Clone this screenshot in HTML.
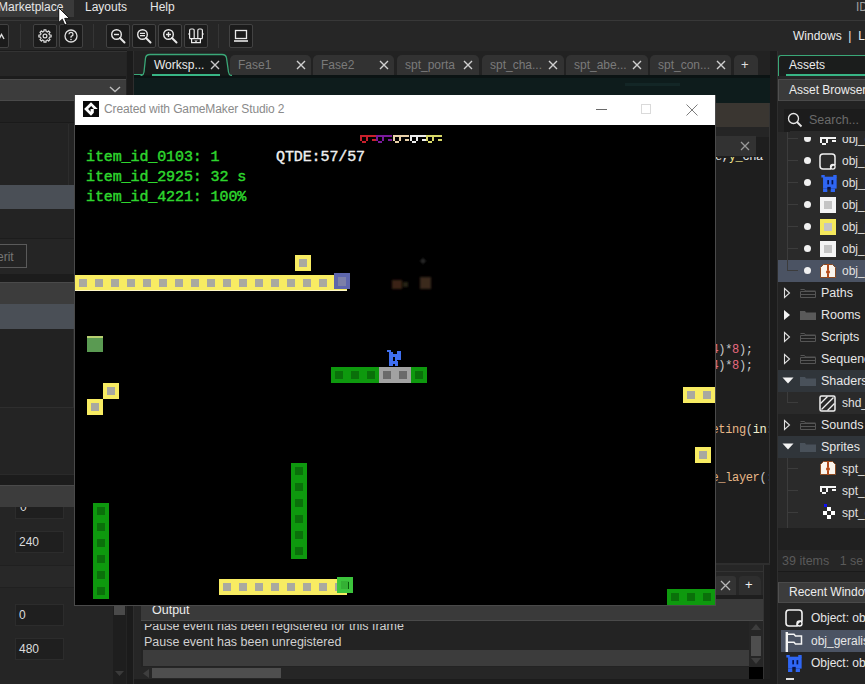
<!DOCTYPE html>
<html><head><meta charset="utf-8">
<style>
*{box-sizing:border-box;margin:0;padding:0}
html,body{width:865px;height:684px;overflow:hidden;background:#232323;font-family:"Liberation Sans",sans-serif;font-size:12px;color:#d8d8d8}
.a{position:absolute}
.t{position:absolute;white-space:pre;line-height:14px}
</style></head><body>
<!-- menu bar -->
<div class="a" style="left:0;top:0;width:865px;height:21px;background:#272727;border-bottom:1px solid #383838"></div>
<div class="a" style="left:0;top:0;width:74px;height:17px;background:#3a3a3a"></div>
<div class="t" style="left:-2px;top:0px;color:#e6e6e6">Marketplace</div>
<div class="t" style="left:85px;top:0px;color:#e6e6e6">Layouts</div>
<div class="t" style="left:150px;top:0px;color:#e6e6e6">Help</div>
<div class="t" style="left:856px;top:0px;color:#a0a0a0">ID</div>
<!-- toolbar -->
<div class="a" style="left:0;top:21px;width:865px;height:30px;background:#262626"></div>
<div class="a" style="left:-15px;top:24px;width:24px;height:24px;background:#1b1b1b;border:1px solid #424242;border-radius:2px"></div>
<svg class="a" style="left:0;top:31px" width="8" height="12"><path d="M-1 8 L1.5 3.5 L4 8" fill="none" stroke="#ddd" stroke-width="1.4"/></svg>
<div class="a" style="left:20px;top:24px;width:1px;height:24px;background:#353535"></div>
<div class="a" style="left:33px;top:24px;width:24px;height:24px;background:#1b1b1b;border:1px solid #424242;border-radius:2px"></div>
<svg class="a" style="left:37px;top:28px" width="16" height="16" viewBox="0 0 16 16"><path d="M12.25 6.24 L12.46 6.89 L14.12 6.98 L14.12 9.02 L12.46 9.11 L12.25 9.76 L11.94 10.37 L13.04 11.60 L11.60 13.04 L10.37 11.94 L9.76 12.25 L9.11 12.46 L9.02 14.12 L6.98 14.12 L6.89 12.46 L6.24 12.25 L5.63 11.94 L4.40 13.04 L2.96 11.60 L4.06 10.37 L3.75 9.76 L3.54 9.11 L1.88 9.02 L1.88 6.98 L3.54 6.89 L3.75 6.24 L4.06 5.63 L2.96 4.40 L4.40 2.96 L5.63 4.06 L6.24 3.75 L6.89 3.54 L6.98 1.88 L9.02 1.88 L9.11 3.54 L9.76 3.75 L10.37 4.06 L11.60 2.96 L13.04 4.40 L11.94 5.63Z" fill="none" stroke="#e0e0e0" stroke-width="1.2" stroke-linejoin="round"/><circle cx="8" cy="8" r="1.9" fill="none" stroke="#e0e0e0" stroke-width="1.2"/></svg>
<div class="a" style="left:59px;top:24px;width:24px;height:24px;background:#1b1b1b;border:1px solid #424242;border-radius:2px"></div>
<svg class="a" style="left:63px;top:28px" width="16" height="16" viewBox="0 0 16 16"><circle cx="8" cy="8" r="6" fill="none" stroke="#e0e0e0" stroke-width="1.3"/><path d="M6 6.3a2 2 0 1 1 2.6 1.9c-.5.2-.6.5-.6 1v.6" fill="none" stroke="#e0e0e0" stroke-width="1.3"/><circle cx="8" cy="11.5" r=".8" fill="#e0e0e0"/></svg>
<div class="a" style="left:93px;top:24px;width:1px;height:24px;background:#353535"></div>
<div class="a" style="left:106px;top:24px;width:24px;height:24px;background:#1b1b1b;border:1px solid #424242;border-radius:2px"></div>
<svg class="a" style="left:110px;top:28px" width="16" height="16" viewBox="0 0 16 16"><circle cx="6.5" cy="6.5" r="4.8" fill="none" stroke="#e8e8e8" stroke-width="1.4"/><path d="M10 10l4.5 4.5" stroke="#e8e8e8" stroke-width="2" stroke-linecap="round"/><path d="M4 6.5h5" stroke="#e8e8e8" stroke-width="1.4"/></svg>
<div class="a" style="left:132px;top:24px;width:24px;height:24px;background:#1b1b1b;border:1px solid #424242;border-radius:2px"></div>
<svg class="a" style="left:136px;top:28px" width="16" height="16" viewBox="0 0 16 16"><circle cx="6.5" cy="6.5" r="4.8" fill="none" stroke="#e8e8e8" stroke-width="1.4"/><path d="M10 10l4.5 4.5" stroke="#e8e8e8" stroke-width="2" stroke-linecap="round"/><path d="M4 5.3h5M4 7.7h5" stroke="#e8e8e8" stroke-width="1.2"/></svg>
<div class="a" style="left:158px;top:24px;width:24px;height:24px;background:#1b1b1b;border:1px solid #424242;border-radius:2px"></div>
<svg class="a" style="left:162px;top:28px" width="16" height="16" viewBox="0 0 16 16"><circle cx="6.5" cy="6.5" r="4.8" fill="none" stroke="#e8e8e8" stroke-width="1.4"/><path d="M10 10l4.5 4.5" stroke="#e8e8e8" stroke-width="2" stroke-linecap="round"/><path d="M4 6.5h5M6.5 4v5" stroke="#e8e8e8" stroke-width="1.4"/></svg>
<div class="a" style="left:184px;top:24px;width:24px;height:24px;background:#1b1b1b;border:1px solid #424242;border-radius:2px"></div>
<svg class="a" style="left:188px;top:28px" width="16" height="16" viewBox="0 0 16 16"><path d="M1.6 10.6V2.4Q1.6 1 3 1H4.8Q6.2 1 6.2 2.4V10.6M9.8 10.6V2.4Q9.8 1 11.2 1H13Q14.4 1 14.4 2.4V10.6M1.6 10.6H14.4M3.6 10.6V14.6H12.4V10.6" fill="none" stroke="#ececec" stroke-width="1.2"/><path d="M6.3 12.4L8 14.3 9.7 12.4z M0 6L1.6 4.4V7.6z M16 6L14.4 4.4V7.6z" fill="#ececec"/></svg>
<div class="a" style="left:218px;top:24px;width:1px;height:24px;background:#353535"></div>
<div class="a" style="left:229px;top:24px;width:24px;height:24px;background:#1b1b1b;border:1px solid #424242;border-radius:2px"></div>
<svg class="a" style="left:233px;top:28px" width="16" height="16" viewBox="0 0 16 16"><rect x="2.5" y="2.5" width="11" height="8" fill="none" stroke="#e8e8e8" stroke-width="1.3"/><path d="M1 13h14" stroke="#e8e8e8" stroke-width="1.6"/></svg>
<div class="t" style="left:793px;top:29px;color:#ececec">Windows  |  L</div>

<!-- left panel -->
<div class="a" style="left:0;top:51px;width:127px;height:633px;background:#242424"></div>
<div class="a" style="left:0;top:51px;width:126px;height:28px;background:#262626"></div>
<div class="a" style="left:0;top:50px;width:127px;height:1px;background:#1c1c1c"></div><div class="a" style="left:0;top:51px;width:127px;height:1px;background:#333"></div><div class="a" style="left:0;top:76px;width:126px;height:3px;background:#1c1c1c"></div><div class="a" style="left:0;top:79px;width:126px;height:22px;background:#3c3c3c;border-top:1px solid #4c4c4c;border-bottom:1px solid #4a4a4a"></div>
<svg class="a" style="left:108px;top:84px" width="14" height="10"><path d="M2 3l5 4.5 5-4.5" fill="none" stroke="#bdbdbd" stroke-width="1.4"/></svg>
<div class="a" style="left:0;top:101px;width:126px;height:22px;background:#212121;border-bottom:1px solid #1a1a1a"></div>
<div class="a" style="left:0;top:124px;width:126px;height:61px;background:#232323"></div>
<div class="a" style="left:68px;top:124px;width:1px;height:61px;background:#2c2c2c"></div>
<div class="a" style="left:0;top:185px;width:126px;height:24px;background:#4a4f56"></div>
<div class="a" style="left:0;top:209px;width:126px;height:30px;background:#232323;border-bottom:1px solid #1c1c1c"></div>
<div class="a" style="left:0;top:239px;width:126px;height:35px;background:#252525"></div>
<div class="a" style="left:-20px;top:244px;width:47px;height:24px;border:1px solid #5a5a5a;background:#242424"></div>
<div class="t" style="left:-3px;top:250px;color:#767676">erit</div>
<div class="a" style="left:0;top:274px;width:126px;height:8px;background:#1c1c1c"></div>
<div class="a" style="left:0;top:282px;width:126px;height:22px;background:#3c3c3c;border-top:1px solid #4a4a4a"></div>
<div class="a" style="left:0;top:304px;width:126px;height:25px;background:#4a4f56"></div>
<div class="a" style="left:0;top:329px;width:126px;height:79px;background:#222222;border-bottom:1px solid #2e2e2e"></div><div class="a" style="left:73px;top:329px;width:1px;height:79px;background:#2e2e2e"></div>
<div class="a" style="left:0;top:408px;width:126px;height:66px;background:#242424"></div>
<div class="a" style="left:0;top:474px;width:126px;height:11px;background:#1c1c1c;border-top:1px solid #2a2a2a"></div>
<div class="a" style="left:0;top:507px;width:113px;height:177px;background:#252525"></div>
<div class="a" style="left:15px;top:497px;width:49px;height:22px;background:#1f1f1f;border:1px solid #2c2c2c"></div>
<div class="t" style="left:20px;top:500px;color:#dcdcdc">0</div>
<div class="a" style="left:0;top:485px;width:126px;height:22px;background:#3c3c3c;border-top:1px solid #4a4a4a"></div>
<div class="a" style="left:15px;top:531px;width:49px;height:22px;background:#1f1f1f;border:1px solid #2c2c2c"></div>
<div class="t" style="left:19px;top:535px;color:#dcdcdc">240</div>
<div class="a" style="left:0;top:565px;width:113px;height:23px;background:#282828;border-top:1px solid #202020;border-bottom:1px solid #202020"></div>
<div class="a" style="left:15px;top:604px;width:49px;height:22px;background:#1f1f1f;border:1px solid #2c2c2c"></div>
<div class="t" style="left:19px;top:608px;color:#dcdcdc">0</div>
<div class="a" style="left:15px;top:638px;width:49px;height:22px;background:#1f1f1f;border:1px solid #2c2c2c"></div>
<div class="t" style="left:19px;top:642px;color:#dcdcdc">480</div>
<div class="a" style="left:113px;top:507px;width:13px;height:177px;background:#1e1e1e"></div>
<div class="a" style="left:114px;top:605px;width:11px;height:10px;background:#4a4a4a"></div>
<svg class="a" style="left:113px;top:670px" width="13" height="8"><path d="M2 1h9l-4.5 5z" fill="#3a3a3a"/></svg>
<div class="a" style="left:127px;top:51px;width:6px;height:633px;background:#1b1b1b"></div>
<div class="a" style="left:133px;top:51px;width:1px;height:633px;background:#2e2e2e"></div>

<!-- workspace -->
<div class="a" style="left:134px;top:51px;width:636px;height:24px;background:#222222"></div>
<div class="a" style="left:134px;top:75px;width:636px;height:490px;background:#0e1c1c"></div><div class="a" style="left:134px;top:75px;width:636px;height:3px;background:#0b1313"></div><div class="a" style="left:625px;top:83px;width:55px;height:3px;background:#132626"></div>
<div class="a" style="left:134px;top:74px;width:160px;height:1px;background:linear-gradient(90deg,#3aa878,#3aa878 60%,rgba(58,168,120,0))"></div>
<div class="a" style="left:230px;top:55px;width:81px;height:20px;background:#323232;border-radius:5px 5px 0 0"></div><div class="t" style="left:238px;top:58px;color:#7a7a7a">Fase1</div><svg class="a" style="left:296px;top:60px" width="10" height="10"><path d="M1 1L9 9M9 1L1 9" stroke="#d0d0d0" stroke-width="1.4"/></svg><div class="a" style="left:313px;top:55px;width:81px;height:20px;background:#323232;border-radius:5px 5px 0 0"></div><div class="t" style="left:321px;top:58px;color:#7a7a7a">Fase2</div><svg class="a" style="left:379px;top:60px" width="10" height="10"><path d="M1 1L9 9M9 1L1 9" stroke="#d0d0d0" stroke-width="1.4"/></svg><div class="a" style="left:397px;top:55px;width:82px;height:20px;background:#323232;border-radius:5px 5px 0 0"></div><div class="t" style="left:405px;top:58px;color:#7a7a7a">spt_porta</div><svg class="a" style="left:463px;top:60px" width="10" height="10"><path d="M1 1L9 9M9 1L1 9" stroke="#d0d0d0" stroke-width="1.4"/></svg><div class="a" style="left:482px;top:55px;width:82px;height:20px;background:#323232;border-radius:5px 5px 0 0"></div><div class="t" style="left:490px;top:58px;color:#7a7a7a">spt_cha...</div><svg class="a" style="left:548px;top:60px" width="10" height="10"><path d="M1 1L9 9M9 1L1 9" stroke="#d0d0d0" stroke-width="1.4"/></svg><div class="a" style="left:566px;top:55px;width:82px;height:20px;background:#323232;border-radius:5px 5px 0 0"></div><div class="t" style="left:574px;top:58px;color:#7a7a7a">spt_abe...</div><svg class="a" style="left:632px;top:60px" width="10" height="10"><path d="M1 1L9 9M9 1L1 9" stroke="#d0d0d0" stroke-width="1.4"/></svg><div class="a" style="left:650px;top:55px;width:81px;height:20px;background:#323232;border-radius:5px 5px 0 0"></div><div class="t" style="left:658px;top:58px;color:#7a7a7a">spt_con...</div><svg class="a" style="left:716px;top:60px" width="10" height="10"><path d="M1 1L9 9M9 1L1 9" stroke="#d0d0d0" stroke-width="1.4"/></svg>
<div class="a" style="left:734px;top:55px;width:24px;height:20px;background:#323232;border-radius:5px 5px 0 0"></div>
<div class="t" style="left:741px;top:58px;color:#e0e0e0;font-size:13px">+</div>
<svg class="a" style="left:140px;top:53px" width="92" height="23"><path d="M0.5 22.5 Q3.5 22.5 4 19 L5.5 5 Q6 1.5 10 1.5 H82 Q86 1.5 86.5 5 L88.5 19 Q89 22.5 92 22.5" fill="#161a19" stroke="#3aa878" stroke-width="1.3"/></svg>
<div class="t" style="left:154px;top:58px;color:#eaeaea">Worksp...</div>
<svg class="a" style="left:210px;top:60px" width="10" height="10"><path d="M1 1L9 9M9 1L1 9" stroke="#c8c8c8" stroke-width="1.4"/></svg>
<div class="a" style="left:152px;top:74px;width:68px;height:2px;background:#38b585"></div>
<!-- code window -->
<div class="a" style="left:140px;top:103px;width:630px;height:24px;background:#3a3631"></div>
<div class="a" style="left:140px;top:127px;width:630px;height:10px;background:#252525"></div>
<div class="a" style="left:140px;top:137px;width:630px;height:427px;background:#1e1e1e"></div>
<div class="a" style="left:700px;top:136px;width:56px;height:20px;background:#323232"></div>
<svg class="a" style="left:740px;top:141px" width="10" height="10"><path d="M1 1L9 9M9 1L1 9" stroke="#9a9a9a" stroke-width="1.3"/></svg>
<div class="a" style="left:715px;top:157px;width:55px;height:407px;background:#1e1e1e;overflow:hidden">
<div class="t" style="left:0;top:-8px;font:12px/16px 'Liberation Mono',monospace;letter-spacing:-0.35px;color:#d8d8d8"><span style="color:#e8e8e8">e,</span><span style="color:#f0e890">y_</span><span style="color:#e8e8e8">cha</span></div>
<div class="t" style="left:-3.5px;top:185px;font:12px/16px 'Liberation Mono',monospace;letter-spacing:-0.35px;color:#c8c8c8"><span style="color:#e07080">4</span>)*<span style="color:#e86a80">8</span>);
<span style="color:#e07080">4</span>)*<span style="color:#e86a80">8</span>);</div>
<div class="t" style="left:-3.5px;top:265px;font:12px/16px 'Liberation Mono',monospace;letter-spacing:-0.35px;color:#c8c8c8"><span style="color:#e8b888">eting</span>(<span style="color:#f0f0d0">in:</span></div>
<div class="t" style="left:-3.5px;top:313px;font:12px/16px 'Liberation Mono',monospace;letter-spacing:-0.35px;color:#c8c8c8"><span style="color:#e8b888">e_layer</span>(:</div>
</div>
<div class="a" style="left:769px;top:103px;width:1px;height:461px;background:#333"></div>
<div class="a" style="left:140px;top:563px;width:630px;height:2px;background:#2e2e2e"></div>

<!-- right separator + panel -->
<div class="a" style="left:770px;top:51px;width:8px;height:633px;background:#1c1c1c"></div>
<div class="a" style="left:777px;top:51px;width:88px;height:633px;background:#262626;border-left:1px solid #2e2e2e"></div>
<div class="a" style="left:778px;top:55px;width:87px;height:21px;background:#1b1d1c;border-left:1.3px solid #3aa878;border-top:1.3px solid #3aa878;border-radius:3px 0 0 0"></div>
<div class="t" style="left:789px;top:58px;color:#ececec">Assets</div>
<div class="a" style="left:786px;top:74px;width:79px;height:2px;background:#38b585"></div>
<div class="a" style="left:778px;top:79px;width:87px;height:22px;background:#3a3a3a;border-left:1px solid #505050;border-top:1px solid #4a4a4a;border-bottom:1px solid #4a4a4a"></div>
<div class="t" style="left:789px;top:83px;color:#ececec">Asset Browser</div>
<div class="a" style="left:778px;top:101px;width:87px;height:31px;background:#232323"></div>
<div class="a" style="left:784px;top:109px;width:81px;height:23px;background:#1c1c1c"></div>
<svg class="a" style="left:787px;top:112px" width="16" height="16"><circle cx="6.5" cy="6.5" r="5" fill="none" stroke="#e8e8e8" stroke-width="1.3"/><path d="M10 10L14.5 14.5" stroke="#e8e8e8" stroke-width="1.8"/></svg>
<div class="t" style="left:809px;top:113px;color:#6a6a6a;font-size:12.5px">Search...</div>
<div class="a" style="left:778px;top:132px;width:87px;height:150px;background:#2a2a2a"></div><div class="a" style="left:778px;top:260px;width:87px;height:22px;background:#4b5363"></div><div class="a" style="left:778px;top:282px;width:87px;height:88px;background:#222222"></div><div class="a" style="left:778px;top:370px;width:87px;height:22px;background:#30353a"></div><div class="a" style="left:778px;top:392px;width:87px;height:22px;background:#2a2a2a"></div><div class="a" style="left:778px;top:414px;width:87px;height:22px;background:#222222"></div><div class="a" style="left:778px;top:436px;width:87px;height:22px;background:#30353a"></div><div class="a" style="left:778px;top:458px;width:87px;height:70px;background:#2a2a2a"></div><div class="a" style="left:787px;top:132px;width:1px;height:139px;background:#3c3c3c"></div><div class="a" style="left:788px;top:138px;width:10px;height:1px;background:#3c3c3c"></div><div class="a" style="left:788px;top:160px;width:10px;height:1px;background:#3c3c3c"></div><div class="a" style="left:788px;top:182px;width:10px;height:1px;background:#3c3c3c"></div><div class="a" style="left:788px;top:204px;width:10px;height:1px;background:#3c3c3c"></div><div class="a" style="left:788px;top:226px;width:10px;height:1px;background:#3c3c3c"></div><div class="a" style="left:788px;top:248px;width:10px;height:1px;background:#3c3c3c"></div><div class="a" style="left:788px;top:270px;width:10px;height:1px;background:#3c3c3c"></div><div class="a" style="left:787px;top:392px;width:1px;height:11px;background:#3c3c3c"></div><div class="a" style="left:788px;top:402px;width:10px;height:1px;background:#3c3c3c"></div><div class="a" style="left:787px;top:458px;width:1px;height:70px;background:#3c3c3c"></div><div class="a" style="left:788px;top:468px;width:10px;height:1px;background:#3c3c3c"></div><div class="a" style="left:788px;top:490px;width:10px;height:1px;background:#3c3c3c"></div><div class="a" style="left:788px;top:512px;width:10px;height:1px;background:#3c3c3c"></div><div class="a" style="left:804px;top:135.0px;width:7px;height:7px;border-radius:50%;background:#f0f0f0"></div><div class="a" style="left:804px;top:157.0px;width:7px;height:7px;border-radius:50%;background:#f0f0f0"></div><div class="a" style="left:804px;top:179.0px;width:7px;height:7px;border-radius:50%;background:#f0f0f0"></div><div class="a" style="left:804px;top:201.0px;width:7px;height:7px;border-radius:50%;background:#f0f0f0"></div><div class="a" style="left:804px;top:223.0px;width:7px;height:7px;border-radius:50%;background:#f0f0f0"></div><div class="a" style="left:804px;top:245.0px;width:7px;height:7px;border-radius:50%;background:#f0f0f0"></div><div class="a" style="left:804px;top:267.0px;width:7px;height:7px;border-radius:50%;background:#f0f0f0"></div><svg class="a" style="left:820px;top:137px" width="16" height="8"><g fill="#f4f4f4"><rect x="0" y="0" width="16" height="2"/><rect x="0" y="2" width="2" height="4"/><rect x="6" y="2" width="2" height="4"/><rect x="2" y="6" width="4" height="2"/><rect x="12" y="3" width="4" height="2"/></g></svg><svg class="a" style="left:819px;top:153px" width="17" height="17" viewBox="0 0 17 17"><path d="M4 1H13Q16 1 16 4V11.5A4.5 4.5 0 0 0 11.5 16H4Q1 16 1 13V4Q1 1 4 1Z" fill="none" stroke="#f0f0f0" stroke-width="1.5"/><circle cx="13.8" cy="13.8" r="2.3" fill="none" stroke="#f0f0f0" stroke-width="1.3"/></svg><svg class="a" style="left:821px;top:175px" width="16" height="17" viewBox="0 0 18 20"><g fill="#2f66f4"><rect x="0" y="0" width="4" height="3"/><rect x="14" y="0" width="4" height="3"/><rect x="2" y="2" width="16" height="14"/><rect x="2" y="16" width="5" height="4"/><rect x="11" y="16" width="5" height="4"/></g><rect x="7" y="6" width="2" height="5" fill="#06124a"/><rect x="12" y="6" width="2" height="5" fill="#06124a"/><rect x="7" y="14" width="4" height="3" fill="#06124a"/></svg><div class="a" style="left:820px;top:197px;width:16px;height:16px;background:#f4f4f4"></div><div class="a" style="left:824px;top:201px;width:8px;height:8px;background:#c4c4c4"></div><div class="a" style="left:820px;top:219px;width:16px;height:16px;background:#f4e85c"></div><div class="a" style="left:824px;top:223px;width:8px;height:8px;background:#c4c4c4"></div><div class="a" style="left:820px;top:241px;width:16px;height:16px;background:#f4f4f4"></div><div class="a" style="left:824px;top:245px;width:8px;height:8px;background:#c4c4c4"></div><svg class="a" style="left:820px;top:264px" width="16" height="14" viewBox="0 0 16 14"><path d="M3.5 0.5H12.5L15.5 3.5V13.5H0.5V3.5Z" fill="#faf4ec" stroke="#8a4a22" stroke-width="1"/><rect x="7" y="0" width="2" height="14" fill="#b04a1a"/><circle cx="8" cy="8" r="1.6" fill="none" stroke="#c05a2a" stroke-width="1"/></svg><div class="t" style="left:842px;top:132.0px;color:#e0e0e0">obj_c</div><div class="t" style="left:842px;top:154.0px;color:#e0e0e0">obj_g</div><div class="t" style="left:842px;top:176.0px;color:#e0e0e0">obj_j</div><div class="t" style="left:842px;top:198.0px;color:#e0e0e0">obj_l</div><div class="t" style="left:842px;top:220.0px;color:#e0e0e0">obj_p</div><div class="t" style="left:842px;top:242.0px;color:#e0e0e0">obj_p</div><div class="t" style="left:842px;top:264.0px;color:#e0e0e0">obj_p</div><svg class="a" style="left:783px;top:286.5px" width="8" height="12"><path d="M1.5 1.5L6.5 6 1.5 10.5Z" fill="none" stroke="#e0e0e0" stroke-width="1.1"/></svg><svg class="a" style="left:800px;top:287.5px" width="16" height="10"><path d="M0.5 1.5h4l1 1.5h10M0.5 3.5h15v6h-15zM0.5 6.5h15" fill="none" stroke="#555" stroke-width="1"/></svg><div class="t" style="left:821px;top:286.0px;color:#e6e6e6;font-size:12.5px">Paths</div><svg class="a" style="left:783px;top:308.5px" width="8" height="12"><path d="M1 1L7 6 1 11Z" fill="#f4f4f4"/></svg><svg class="a" style="left:800px;top:309.5px" width="16" height="10"><path d="M0 1h5l1 1.5H16V10H0Z" fill="#5a5a5a"/></svg><div class="t" style="left:821px;top:308.0px;color:#e6e6e6;font-size:12.5px">Rooms</div><svg class="a" style="left:783px;top:330.5px" width="8" height="12"><path d="M1.5 1.5L6.5 6 1.5 10.5Z" fill="none" stroke="#e0e0e0" stroke-width="1.1"/></svg><svg class="a" style="left:800px;top:331.5px" width="16" height="10"><path d="M0.5 1.5h4l1 1.5h10M0.5 3.5h15v6h-15zM0.5 6.5h15" fill="none" stroke="#555" stroke-width="1"/></svg><div class="t" style="left:821px;top:330.0px;color:#e6e6e6;font-size:12.5px">Scripts</div><svg class="a" style="left:783px;top:352.5px" width="8" height="12"><path d="M1.5 1.5L6.5 6 1.5 10.5Z" fill="none" stroke="#e0e0e0" stroke-width="1.1"/></svg><svg class="a" style="left:800px;top:353.5px" width="16" height="10"><path d="M0.5 1.5h4l1 1.5h10M0.5 3.5h15v6h-15zM0.5 6.5h15" fill="none" stroke="#555" stroke-width="1"/></svg><div class="t" style="left:821px;top:352.0px;color:#e6e6e6;font-size:12.5px">Sequences</div><svg class="a" style="left:782px;top:376.5px" width="12" height="8"><path d="M0.5 0.5H11.5L6 6.5Z" fill="#f4f4f4"/></svg><svg class="a" style="left:800px;top:375.5px" width="16" height="10"><path d="M0 1h5l1 1.5H16V10H0Z" fill="#49515a"/></svg><div class="t" style="left:821px;top:374.0px;color:#e6e6e6;font-size:12.5px">Shaders</div><svg class="a" style="left:783px;top:418.5px" width="8" height="12"><path d="M1.5 1.5L6.5 6 1.5 10.5Z" fill="none" stroke="#e0e0e0" stroke-width="1.1"/></svg><svg class="a" style="left:800px;top:419.5px" width="16" height="10"><path d="M0.5 1.5h4l1 1.5h10M0.5 3.5h15v6h-15zM0.5 6.5h15" fill="none" stroke="#555" stroke-width="1"/></svg><div class="t" style="left:821px;top:418.0px;color:#e6e6e6;font-size:12.5px">Sounds</div><svg class="a" style="left:782px;top:442.5px" width="12" height="8"><path d="M0.5 0.5H11.5L6 6.5Z" fill="#f4f4f4"/></svg><svg class="a" style="left:800px;top:441.5px" width="16" height="10"><path d="M0 1h5l1 1.5H16V10H0Z" fill="#49515a"/></svg><div class="t" style="left:821px;top:440.0px;color:#e6e6e6;font-size:12.5px">Sprites</div><svg class="a" style="left:819px;top:394.5px" width="17" height="17" viewBox="0 0 17 17"><rect x="1" y="1" width="15" height="15" rx="1.5" fill="none" stroke="#f0f0f0" stroke-width="1.5"/><path d="M1.5 8.5L8.5 1.5M2.5 14.5L14.5 2.5M8.5 15.5L15.5 8.5" stroke="#f0f0f0" stroke-width="1.4"/></svg><div class="t" style="left:842px;top:396.0px;color:#e0e0e0">shd_</div><svg class="a" style="left:820px;top:461px" width="16" height="14" viewBox="0 0 16 14"><path d="M3.5 0.5H12.5L15.5 3.5V13.5H0.5V3.5Z" fill="#faf4ec" stroke="#8a4a22" stroke-width="1"/><rect x="7" y="0" width="2" height="14" fill="#b04a1a"/><circle cx="8" cy="8" r="1.6" fill="none" stroke="#c05a2a" stroke-width="1"/></svg><svg class="a" style="left:820px;top:486px" width="16" height="8"><g fill="#f4f4f4"><rect x="0" y="0" width="16" height="2"/><rect x="0" y="2" width="2" height="4"/><rect x="6" y="2" width="2" height="4"/><rect x="2" y="6" width="4" height="2"/><rect x="12" y="3" width="4" height="2"/></g></svg><svg class="a" style="left:820px;top:504px" width="16" height="16"><rect x="4" y="0" width="3" height="3" fill="#1010f0"/><rect x="7" y="3" width="4" height="4" fill="#fff"/><rect x="3" y="7" width="4" height="4" fill="#fff"/><rect x="11" y="7" width="4" height="4" fill="#fff"/><rect x="7" y="11" width="4" height="4" fill="#fff"/></svg><div class="t" style="left:842px;top:462.0px;color:#e0e0e0">spt_a</div><div class="t" style="left:842px;top:484.0px;color:#e0e0e0">spt_c</div><div class="t" style="left:842px;top:506.0px;color:#e0e0e0">spt_c</div>
<div class="a" style="left:790px;top:131px;width:75px;height:6px;background:#2a2a2a"></div>
<div class="a" style="left:778px;top:528px;width:87px;height:22px;background:#202020"></div>
<div class="a" style="left:778px;top:550px;width:87px;height:22px;background:#262626;border-bottom:1px solid #1a1a1a"></div>
<div class="t" style="left:782px;top:554px;color:#5a5a5a;font-size:12.5px">39 items   1 se</div>
<div class="a" style="left:778px;top:572px;width:87px;height:10px;background:#232323"></div>
<div class="a" style="left:778px;top:582px;width:87px;height:21px;background:#3c3c3c;border-left:1px solid #505050;border-top:1px solid #4a4a4a;border-bottom:1px solid #4a4a4a"></div>
<div class="t" style="left:789px;top:585px;color:#ececec">Recent Windows</div>
<div class="a" style="left:778px;top:603px;width:87px;height:81px;background:#242424"></div>
<div class="a" style="left:781px;top:630px;width:84px;height:22px;background:#4b5363"></div>
<svg class="a" style="left:785px;top:609px" width="18" height="18" viewBox="0 0 18 18"><path d="M4 1H14Q17 1 17 4V12A5 5 0 0 0 12 17H4Q1 17 1 14V4Q1 1 4 1Z" fill="none" stroke="#f0f0f0" stroke-width="1.6"/><circle cx="14.5" cy="14.5" r="2.5" fill="none" stroke="#f0f0f0" stroke-width="1.4"/></svg>
<div class="t" style="left:811px;top:611px;color:#e6e6e6">Object: obj</div>
<svg class="a" style="left:785px;top:631px" width="18" height="21" viewBox="0 0 18 21"><path d="M1.8 1V21" stroke="#f4f4f4" stroke-width="2.4"/><path d="M2.5 3.2H9L10.5 5H16.5V13H10.5L9 11.2H2.5" fill="none" stroke="#f4f4f4" stroke-width="1.5"/></svg>
<div class="t" style="left:811px;top:634px;color:#e6e6e6">obj_geralista</div>
<svg class="a" style="left:786px;top:655px" width="16" height="17" viewBox="0 0 18 20"><g fill="#2f66f4"><rect x="0" y="0" width="4" height="3"/><rect x="14" y="0" width="4" height="3"/><rect x="2" y="2" width="16" height="14"/><rect x="2" y="16" width="5" height="4"/><rect x="11" y="16" width="5" height="4"/></g><rect x="7" y="6" width="2" height="5" fill="#06124a"/><rect x="12" y="6" width="2" height="5" fill="#06124a"/><rect x="7" y="14" width="4" height="3" fill="#06124a"/></svg>
<div class="t" style="left:811px;top:656px;color:#e6e6e6">Object: obj</div>
<div class="a" style="left:786px;top:678px;width:8px;height:2px;background:#ddd"></div>

<!-- output dock -->
<div class="a" style="left:134px;top:565px;width:636px;height:119px;background:#262626"></div>
<div class="a" style="left:134px;top:571px;width:636px;height:1px;background:#333"></div>
<div class="a" style="left:715px;top:576px;width:21px;height:19px;background:#333;border-radius:3px 3px 0 0"></div>
<svg class="a" style="left:720px;top:580px" width="11" height="11"><path d="M1 1L10 10M10 1L1 10" stroke="#b8b8b8" stroke-width="1.3"/></svg>
<div class="a" style="left:739px;top:576px;width:22px;height:19px;background:#2e2e2e;border-radius:3px 5px 0 0"></div>
<div class="t" style="left:745px;top:578px;color:#f0f0f0;font-size:13px">+</div>
<div class="a" style="left:141px;top:595px;width:622px;height:4px;background:#1e1e1e"></div>
<div class="a" style="left:141px;top:599px;width:622px;height:22px;background:#3a3a3a;border-bottom:1px solid #4a4a4a"></div>
<div class="t" style="left:152px;top:603px;color:#ececec;font-size:12.5px">Output</div>
<div class="a" style="left:141px;top:621px;width:622px;height:63px;background:#232323"></div>
<div class="a" style="left:141px;top:624px;width:608px;height:26px;overflow:hidden"><div class="t" style="left:3px;top:-6px;color:#d0d0d0;font-size:12.5px;line-height:16px">Pause event has been registered for this frame
Pause event has been unregistered</div></div>
<div class="a" style="left:143px;top:650px;width:606px;height:16px;background:#3c3c3c"></div>
<div class="a" style="left:749px;top:621px;width:14px;height:46px;background:#262626"></div>
<svg class="a" style="left:750px;top:623px" width="12" height="8"><path d="M1 7h10L6 1z" fill="#3e3e3e"/></svg>
<div class="a" style="left:751px;top:636px;width:10px;height:20px;background:#4e4e4e"></div>
<svg class="a" style="left:750px;top:657px" width="12" height="8"><path d="M1 1h10L6 7z" fill="#3e3e3e"/></svg>
<div class="a" style="left:141px;top:667px;width:608px;height:12px;background:#262626"></div>
<svg class="a" style="left:142px;top:668px" width="8" height="11"><path d="M7 1v9L1 5.5z" fill="#3e3e3e"/></svg>
<div class="a" style="left:152px;top:668px;width:129px;height:10px;background:#4e4e4e"></div>
<svg class="a" style="left:750px;top:668px" width="8" height="11"><path d="M1 1v9l6-4.5z" fill="#3e3e3e"/></svg>
<div class="a" style="left:749px;top:667px;width:14px;height:12px;background:#000"></div>
<div class="a" style="left:763px;top:565px;width:7px;height:119px;background:#1f1f1f;border-left:1px solid #333"></div>
<div class="a" style="left:134px;top:679px;width:636px;height:5px;background:#1c1c1c"></div>

<!-- game window -->
<div class="a" style="left:74px;top:95px;width:642px;height:511px;background:#fff;border:1px solid #4a4a4a;border-top:none"></div><div class="a" style="left:75px;top:95px;width:640px;height:30px;background:#fff"></div>
<svg class="a" style="left:83px;top:101px" width="16" height="16" viewBox="0 0 16 16"><rect width="16" height="16" fill="#0a0a0a"/><path d="M8 1.2L14.8 8H10.8V11.8L8 14.8 1.1 8Z M8.2 5.1L5.1 8.1 7.6 10.8V8.1H10.9Z" fill="#fff" fill-rule="evenodd"/></svg>
<div class="t" style="left:104px;top:102px;color:#8a8a8a;font-size:12px;letter-spacing:-0.12px">Created with GameMaker Studio 2</div>
<div class="a" style="left:596px;top:109px;width:11px;height:1px;background:#6a6a6a"></div>
<div class="a" style="left:641px;top:104px;width:10px;height:10px;border:1px solid #dadada"></div>
<svg class="a" style="left:686px;top:104px" width="12" height="12"><path d="M0.5 0.5L11.5 11.5M11.5 0.5L0.5 11.5" stroke="#6e6e6e" stroke-width="0.9"/></svg>
<svg class="a" style="left:75px;top:125px" width="640" height="480" viewBox="0 0 640 480"><defs><filter id="bl"><feGaussianBlur stdDeviation="1.2"/></filter></defs><rect width="640" height="480" fill="#000"/><rect x="220" y="130" width="16" height="16" fill="#f8ec62"/><rect x="224" y="134" width="8" height="8" fill="#aaa9a0"/><rect x="0" y="150" width="16" height="16" fill="#f8ec62"/><rect x="4" y="154" width="8" height="8" fill="#aaa9a0"/><rect x="16" y="150" width="16" height="16" fill="#f8ec62"/><rect x="20" y="154" width="8" height="8" fill="#aaa9a0"/><rect x="32" y="150" width="16" height="16" fill="#f8ec62"/><rect x="36" y="154" width="8" height="8" fill="#aaa9a0"/><rect x="48" y="150" width="16" height="16" fill="#f8ec62"/><rect x="52" y="154" width="8" height="8" fill="#aaa9a0"/><rect x="64" y="150" width="16" height="16" fill="#f8ec62"/><rect x="68" y="154" width="8" height="8" fill="#aaa9a0"/><rect x="80" y="150" width="16" height="16" fill="#f8ec62"/><rect x="84" y="154" width="8" height="8" fill="#aaa9a0"/><rect x="96" y="150" width="16" height="16" fill="#f8ec62"/><rect x="100" y="154" width="8" height="8" fill="#aaa9a0"/><rect x="112" y="150" width="16" height="16" fill="#f8ec62"/><rect x="116" y="154" width="8" height="8" fill="#aaa9a0"/><rect x="128" y="150" width="16" height="16" fill="#f8ec62"/><rect x="132" y="154" width="8" height="8" fill="#aaa9a0"/><rect x="144" y="150" width="16" height="16" fill="#f8ec62"/><rect x="148" y="154" width="8" height="8" fill="#aaa9a0"/><rect x="160" y="150" width="16" height="16" fill="#f8ec62"/><rect x="164" y="154" width="8" height="8" fill="#aaa9a0"/><rect x="176" y="150" width="16" height="16" fill="#f8ec62"/><rect x="180" y="154" width="8" height="8" fill="#aaa9a0"/><rect x="192" y="150" width="16" height="16" fill="#f8ec62"/><rect x="196" y="154" width="8" height="8" fill="#aaa9a0"/><rect x="208" y="150" width="16" height="16" fill="#f8ec62"/><rect x="212" y="154" width="8" height="8" fill="#aaa9a0"/><rect x="224" y="150" width="16" height="16" fill="#f8ec62"/><rect x="228" y="154" width="8" height="8" fill="#aaa9a0"/><rect x="240" y="150" width="16" height="16" fill="#f8ec62"/><rect x="244" y="154" width="8" height="8" fill="#aaa9a0"/><rect x="256" y="150" width="16" height="16" fill="#f8ec62"/><rect x="260" y="154" width="8" height="8" fill="#aaa9a0"/><rect x="0" y="165" width="272" height="1" fill="#fff8c8"/><rect x="259" y="148" width="16" height="16" fill="#5e66ac"/><rect x="263" y="152" width="8" height="9" fill="#7d80a8"/><g filter="url(#bl)"><rect x="317" y="155" width="10" height="9" fill="#3a2416"/><rect x="328" y="157" width="5" height="5" fill="#262218"/><rect x="345" y="152" width="11" height="12" fill="#3a2a1a"/><path d="M348 133l3 3-3 3-3-3z" fill="#2a2a2a"/></g><rect x="12" y="211" width="16" height="16" fill="#5a9a52"/><rect x="12" y="211" width="16" height="2" fill="#b8d070"/><rect x="28" y="258" width="16" height="16" fill="#f8ec62"/><rect x="32" y="262" width="8" height="8" fill="#aaa9a0"/><rect x="12" y="274" width="16" height="16" fill="#f8ec62"/><rect x="16" y="278" width="8" height="8" fill="#aaa9a0"/><rect x="256" y="242" width="16" height="16" fill="#0e990e"/><rect x="260" y="246" width="8" height="8" fill="#0a700a"/><rect x="272" y="242" width="16" height="16" fill="#0e990e"/><rect x="276" y="246" width="8" height="8" fill="#0a700a"/><rect x="288" y="242" width="16" height="16" fill="#0e990e"/><rect x="292" y="246" width="8" height="8" fill="#0a700a"/><rect x="304" y="242" width="16" height="16" fill="#a2a2a2"/><rect x="308" y="246" width="8" height="8" fill="#6a6a6a"/><rect x="320" y="242" width="16" height="16" fill="#a2a2a2"/><rect x="324" y="246" width="8" height="8" fill="#6a6a6a"/><rect x="336" y="242" width="16" height="16" fill="#0e990e"/><rect x="340" y="246" width="8" height="8" fill="#0a700a"/><g transform="translate(312,225)" fill="#3f6ff0"><rect x="0" y="0" width="4" height="2"/><rect x="2" y="2" width="4" height="14"/><rect x="10" y="1" width="4" height="9"/><rect x="5" y="4" width="6" height="3"/><rect x="8" y="7" width="2" height="6"/><rect x="4" y="11" width="7" height="3"/><rect x="8" y="13" width="3" height="3"/></g><rect x="608" y="262" width="16" height="16" fill="#f8ec62"/><rect x="612" y="266" width="8" height="8" fill="#aaa9a0"/><rect x="624" y="262" width="16" height="16" fill="#f8ec62"/><rect x="628" y="266" width="8" height="8" fill="#aaa9a0"/><rect x="620" y="322" width="16" height="16" fill="#f8ec62"/><rect x="624" y="326" width="8" height="8" fill="#aaa9a0"/><rect x="216" y="338" width="16" height="16" fill="#0e990e"/><rect x="220" y="342" width="8" height="8" fill="#0a700a"/><rect x="216" y="354" width="16" height="16" fill="#0e990e"/><rect x="220" y="358" width="8" height="8" fill="#0a700a"/><rect x="216" y="370" width="16" height="16" fill="#0e990e"/><rect x="220" y="374" width="8" height="8" fill="#0a700a"/><rect x="216" y="386" width="16" height="16" fill="#0e990e"/><rect x="220" y="390" width="8" height="8" fill="#0a700a"/><rect x="216" y="402" width="16" height="16" fill="#0e990e"/><rect x="220" y="406" width="8" height="8" fill="#0a700a"/><rect x="216" y="418" width="16" height="16" fill="#0e990e"/><rect x="220" y="422" width="8" height="8" fill="#0a700a"/><rect x="18" y="378" width="16" height="16" fill="#0e990e"/><rect x="22" y="382" width="8" height="8" fill="#0a700a"/><rect x="18" y="394" width="16" height="16" fill="#0e990e"/><rect x="22" y="398" width="8" height="8" fill="#0a700a"/><rect x="18" y="410" width="16" height="16" fill="#0e990e"/><rect x="22" y="414" width="8" height="8" fill="#0a700a"/><rect x="18" y="426" width="16" height="16" fill="#0e990e"/><rect x="22" y="430" width="8" height="8" fill="#0a700a"/><rect x="18" y="442" width="16" height="16" fill="#0e990e"/><rect x="22" y="446" width="8" height="8" fill="#0a700a"/><rect x="18" y="458" width="16" height="16" fill="#0e990e"/><rect x="22" y="462" width="8" height="8" fill="#0a700a"/><rect x="144" y="454" width="16" height="16" fill="#f8ec62"/><rect x="148" y="458" width="8" height="8" fill="#aaa9a0"/><rect x="160" y="454" width="16" height="16" fill="#f8ec62"/><rect x="164" y="458" width="8" height="8" fill="#aaa9a0"/><rect x="176" y="454" width="16" height="16" fill="#f8ec62"/><rect x="180" y="458" width="8" height="8" fill="#aaa9a0"/><rect x="192" y="454" width="16" height="16" fill="#f8ec62"/><rect x="196" y="458" width="8" height="8" fill="#aaa9a0"/><rect x="208" y="454" width="16" height="16" fill="#f8ec62"/><rect x="212" y="458" width="8" height="8" fill="#aaa9a0"/><rect x="224" y="454" width="16" height="16" fill="#f8ec62"/><rect x="228" y="458" width="8" height="8" fill="#aaa9a0"/><rect x="240" y="454" width="16" height="16" fill="#f8ec62"/><rect x="244" y="458" width="8" height="8" fill="#aaa9a0"/><rect x="256" y="454" width="16" height="16" fill="#f8ec62"/><rect x="260" y="458" width="8" height="8" fill="#aaa9a0"/><rect x="262" y="452" width="16" height="16" fill="#3cc43c"/><rect x="266" y="456" width="8" height="8" fill="#34b034"/><rect x="273" y="457" width="1" height="7" fill="#0a5a0a"/><rect x="592" y="464" width="16" height="16" fill="#0e990e"/><rect x="596" y="468" width="8" height="8" fill="#0a700a"/><rect x="608" y="464" width="16" height="16" fill="#0e990e"/><rect x="612" y="468" width="8" height="8" fill="#0a700a"/><rect x="624" y="464" width="16" height="16" fill="#0e990e"/><rect x="628" y="468" width="8" height="8" fill="#0a700a"/><g transform="translate(285,10)" fill="#c8202c"><rect x="0" y="0" width="16" height="2"/><rect x="0" y="2" width="2" height="4"/><rect x="6" y="2" width="2" height="4"/><rect x="2" y="6" width="4" height="2"/><rect x="12" y="4" width="4" height="2"/></g><g transform="translate(301,10)" fill="#7a1a9a"><rect x="0" y="0" width="16" height="2"/><rect x="0" y="2" width="2" height="4"/><rect x="6" y="2" width="2" height="4"/><rect x="2" y="6" width="4" height="2"/><rect x="12" y="4" width="4" height="2"/></g><g transform="translate(318,10)" fill="#e8d0a8"><rect x="0" y="0" width="16" height="2"/><rect x="0" y="2" width="2" height="4"/><rect x="6" y="2" width="2" height="4"/><rect x="2" y="6" width="4" height="2"/><rect x="12" y="4" width="4" height="2"/></g><g transform="translate(335,10)" fill="#ececec"><rect x="0" y="0" width="16" height="2"/><rect x="0" y="2" width="2" height="4"/><rect x="6" y="2" width="2" height="4"/><rect x="2" y="6" width="4" height="2"/><rect x="12" y="4" width="4" height="2"/></g><g transform="translate(351,10)" fill="#d8d868"><rect x="0" y="0" width="16" height="2"/><rect x="0" y="2" width="2" height="4"/><rect x="6" y="2" width="2" height="4"/><rect x="2" y="6" width="4" height="2"/><rect x="12" y="4" width="4" height="2"/></g></svg>
<div class="t" style="left:86px;top:148px;font:15px/20.2px 'Liberation Mono',monospace;letter-spacing:-0.1px;color:#2ed62e;-webkit-text-stroke:0.45px #2ed62e">item_id_0103: 1
item_id_2925: 32 s
item_id_4221: 100%</div>
<div class="t" style="left:276px;top:148px;font:15px/20px 'Liberation Mono',monospace;letter-spacing:-0.1px;color:#f0f0f0;-webkit-text-stroke:0.4px #f0f0f0">QTDE:57/57</div>
<svg class="a" style="left:58px;top:7px;z-index:10" width="14" height="20" viewBox="0 0 14 20"><path d="M0.7 0.7V15.5L4.3 12.2 6.8 18 9.1 17 6.7 11.4H11.5Z" fill="#fff" stroke="#111" stroke-width="1"/></svg>
</body></html>
